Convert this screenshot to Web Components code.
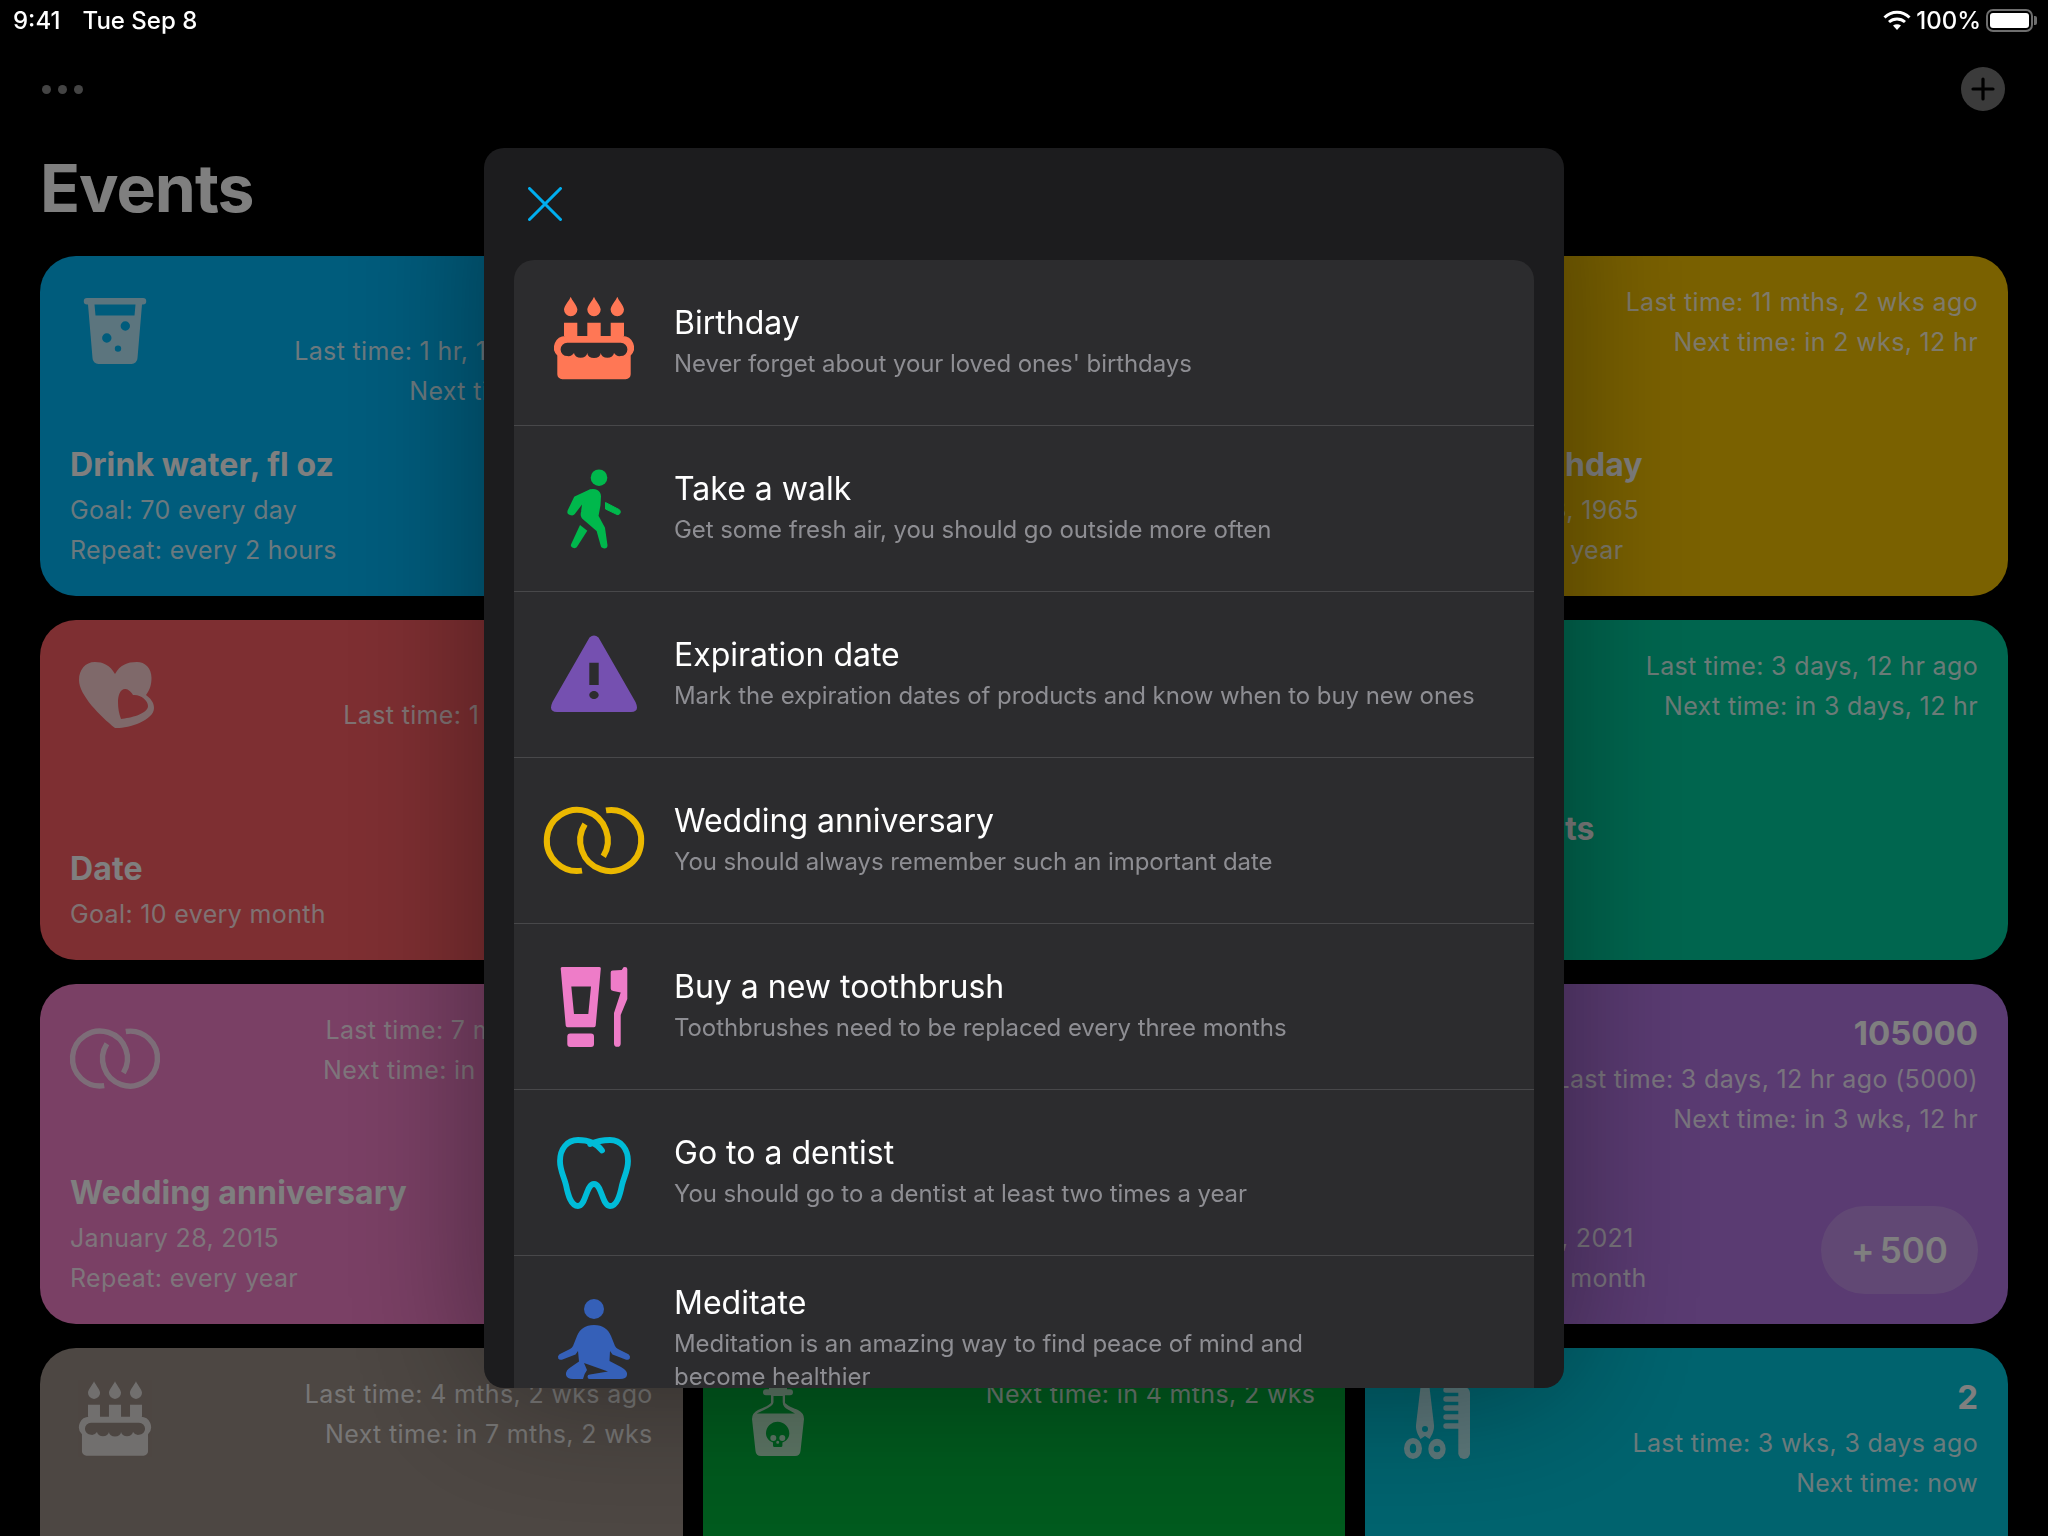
<!DOCTYPE html>
<html>
<head>
<meta charset="utf-8">
<title>Events</title>
<style>
	html, body { margin: 0; height: 1536px; overflow: hidden; background: #000; color: #fff; font-family: Inter, "Liberation Sans", sans-serif; }
</style>
</head>
<body>
<status-bar></status-bar>
<nav-bar></nav-bar>
<page-title>Events</page-title>
<event-grid>
	<event-card color="#00b8f8" icon="water">
		<span slot="value">10</span>
		<span slot="stats">Last time: 1 hr, 11 minutes ago</span>
		<span slot="stats">Next time: in 48 min</span>
		<span slot="title">Drink water, fl oz</span>
		<span slot="info">Goal: 70 every day</span>
		<span slot="info">Repeat: every 2 hours</span>
	</event-card>
	<event-card color="#e8e8ea"></event-card>
	<event-card color="#f4c200">
		<span slot="stats">Last time: 11 mths, 2 wks ago</span>
		<span slot="stats">Next time: in 2 wks, 12 hr</span>
		<span slot="title">Mom's birthday</span>
		<span slot="info">September 23, 1965</span>
		<span slot="info">Repeat: every year</span>
	</event-card>

	<event-card color="#fc5e64" icon="hearts">
		<span slot="value">1</span>
		<span slot="stats">Last time: 1 wk, 22 hr ago</span>
		<span slot="title">Date</span>
		<span slot="info">Goal: 10 every month</span>
	</event-card>
	<event-card color="#e8e8ea"></event-card>
	<event-card color="#00cc9e">
		<span slot="stats">Last time: 3 days, 12 hr ago</span>
		<span slot="stats">Next time: in 3 days, 12 hr</span>
		<span slot="title">Water plants</span>
		<span slot="info"></span>
		<span slot="info"></span>
	</event-card>

	<event-card color="#f480ca" icon="rings" icon-size="72">
		<span slot="stats">Last time: 7 mths, 1 wk ago</span>
		<span slot="stats">Next time: in 4 mths, 2 wks</span>
		<span slot="title">Wedding anniversary</span>
		<span slot="info">January 28, 2015</span>
		<span slot="info">Repeat: every year</span>
	</event-card>
	<event-card color="#e8e8ea"></event-card>
	<event-card color="#b476e4" action="500">
		<span slot="value">105000</span>
		<span slot="stats">Last time: 3 days, 12 hr ago (5000)</span>
		<span slot="stats">Next time: in 3 wks, 12 hr</span>
		<span slot="title">Steps</span>
		<span slot="info">September 15, 2021</span>
		<span slot="info">Repeat: every month</span>
	</event-card>

	<event-card color="#9a8e86" icon="cake" icon-size="72">
		<span slot="stats">Last time: 4 mths, 2 wks ago</span>
		<span slot="stats">Next time: in 7 mths, 2 wks</span>
	</event-card>
	<event-card color="#00b43c" icon="poison">
		<span slot="stats">Next time: in 4 mths, 2 wks</span>
	</event-card>
	<event-card color="#00c6dc" icon="barber">
		<span slot="value">2</span>
		<span slot="stats">Last time: 3 wks, 3 days ago</span>
		<span slot="stats">Next time: now</span>
	</event-card>
</event-grid>

<template-sheet>
	<template-row icon="cake" color="#ff7755" title="Birthday">Never forget about your loved ones' birthdays</template-row>
	<template-row icon="walk" color="#00b84c" title="Take a walk">Get some fresh air, you should go outside more often</template-row>
	<template-row icon="warning" color="#7550b0" title="Expiration date">Mark the expiration dates of products and know when to buy new ones</template-row>
	<template-row icon="rings" color="#ebb800" title="Wedding anniversary">You should always remember such an important date</template-row>
	<template-row icon="brush" color="#ee7cc8" title="Buy a new toothbrush">Toothbrushes need to be replaced every three months</template-row>
	<template-row icon="tooth" color="#00bcd8" title="Go to a dentist">You should go to a dentist at least two times a year</template-row>
	<template-row icon="meditate" color="#3560b8" title="Meditate" last>Meditation is an amazing way to find peace of mind and become healthier</template-row>
</template-sheet>

<script>
const ICONS = {
	water: { box: 90, svg: `<path fill-rule="evenodd" d="M17 12H73a2.8 2.8 0 0 1 0 6.5H72L67.5 72a6 6 0 0 1-6 6H28.5a6 6 0 0 1-6-6L18 18.500H17A2.800 2.800 0 0 1 17 12ZM24.500 18.500 25.500 29.500H64.500L65.500 18.500ZM60 40a4.700 4.700 0 1 0-9.400 0 4.700 4.700 0 0 0 9.400 0ZM41.500 52a4.700 4.700 0 1 0-9.400 0 4.700 4.700 0 0 0 9.400 0ZM51.200 62.600a3.200 3.200 0 1 0-6.400 0 3.200 3.200 0 0 0 6.400 0Z"/>` },
	hearts: { box: 90, svg: `<path fill-rule="evenodd" d="M45 24C40 15 33 12 25 12 15 12 9 20 9 30 9 45 30 66 45 78 56 79 84 71 84 58 84 52 80 48 76 45 80 40 81.500 34 81.500 28 81.500 18 75 12 67 12 57 12 50 15 45 24ZM63 45C60 40 57 39 55 39 50 39 48 46 48 52 48 58 49 64 51 69 60 68 78 64 78 56 78 50 70 44 63 45Z"/>` },
	rings: { box: 80, svg: `<g fill="none" stroke="currentColor" stroke-width="6"><path d="M28 69.600A30.500 30.500 0 1 1 49.300 55.400"/><path d="M52 9.400A30.500 30.500 0 1 1 31 23.100"/></g>` },
	cake: { box: 80, svg: `<path fill-rule="evenodd" d="M10 19.700H23.300V33H33.300V19.700H46.700V33H56.700V19.700H70V33H68.500A11.500 11.500 0 0 1 76.700 52.600V71.300A5 5 0 0 1 71.700 76.300H8.300A5 5 0 0 1 3.300 71.300V52.600A11.500 11.500 0 0 1 11.500 33H10ZM13.300 39.700H66.700A6.700 6.700 0 0 1 66.700 53.100 6.700 6.700 0 0 1 60 50.100 6.670 5 0 0 1 46.700 50.100 6.670 5 0 0 1 33.300 50.100 6.670 5 0 0 1 20 50.100 6.700 6.700 0 0 1 13.300 53.100 6.700 6.700 0 0 1 13.300 39.700Z"/><path d="M16.700-6.300C17.700-3 23.400 3 23.400 6.500A6.700 6.700 0 0 1 10 6.500C10 3 15.700-3 16.700-6.300Z"/><path d="M40-6.300C41-3 46.700 3 46.700 6.500A6.700 6.700 0 0 1 33.300 6.500C33.300 3 39-3 40-6.300Z"/><path d="M63.300-6.300C64.300-3 70 3 70 6.500A6.700 6.700 0 0 1 56.600 6.500C56.600 3 62.300-3 63.300-6.300Z"/>` },
	walk: { box: 80, svg: `<circle cx="45" cy="8.700" r="8.300"/><path stroke="currentColor" stroke-width="2" stroke-linejoin="round" d="M21 28.500 36 21.300C41 20 46 22 46 27.500L45.500 36 43.500 47 50 59 52.500 76.500C52.500 79 48 79 47.700 76.500L43.500 61.500 29 49C27.500 47.500 27.500 45 28 43L29.500 32 20 44.500C18.500 46.500 13.500 45 14.500 42Z"/><path d="M26 56 33.300 61.700 22.900 78C21 80.500 16 78.500 17 75.500Z"/><path stroke="currentColor" stroke-width="1" stroke-linejoin="round" d="M51.500 33.500 65 40.500C67.500 42 66 46.500 63 45.500L51.500 40Z"/>` },
	warning: { box: 80, svg: `<path fill-rule="evenodd" d="M35.500 2.500Q40-1.500 44.500 2.500L81.500 67Q86 77 77 77H3Q-6 77-1.500 67ZM35.300 27.700V50H44.700V27.700ZM40 56C37.500 56 35.300 57.800 35.300 60S37.500 64 40 64 44.700 62.200 44.700 60 42.500 56 40 56Z"/>` },
	brush: { box: 80, svg: `<path fill-rule="evenodd" d="M8 0H45.500Q47 0 46.800 1.500L41.700 58.500Q41.500 60.300 40 60.300H13.400Q12 60.300 11.700 58.500L6.700 1.500Q6.600 0 8 0ZM17.300 19.500 20 47H34.300L37 19.500Z"/><rect x="13.300" y="66.500" width="26.700" height="13.500" rx="3"/><path d="M58.500 3.500 67.700 3 69.500.2Q73.300-.5 73.300 2V32L66.700 48V76.500A3.300 3.300 0 0 1 60 76.500V46L66.700 25.600 59.300 24Q56.700 23.500 56.700 21.500V5.500Q56.700 3.500 58.500 3.500Z"/>` },
	tooth: { box: 80, svg: `<path fill="none" stroke="currentColor" stroke-width="5.800" stroke-linecap="round" stroke-linejoin="round" d="M48 17.500C44 12 36 7 24 7 13 7 6 16 6 28 6 38 10 43 12 52 14 62 17 73 24 73 32 73 32 51 40 51 48 51 48 73 56 73 63 73 66 62 68 52 70 43 74 38 74 28 74 16 67 7 56 7 48 7 42 8.500 36 11"/>` },
	meditate: { box: 80, svg: `<ellipse cx="40" cy="10" rx="10" ry="10"/><path d="M40 26C49 26 54 30 57 37L61 47Q62 49 64 50L74.500 55.300Q76.800 57 75.800 59.500 74.500 61.500 71.500 60.500L58.500 55.500 56 52 55.500 62 67 68Q74 72 73 76 72.500 80 66 80H35.500Q33.500 80 33.500 77.500 33.500 75.500 36 75.500L54 72.500 30 64 33 71Q30 75 29 80H19Q13 80 12 76 11.500 71 17 68L25 62.500 24 52 21.500 55.500 8.500 60.500Q5.500 61.500 4.200 59.500 3.200 57 5.500 55.300L16 50Q18 49 19 47L23 37C26 30 31 26 40 26Z"/>` },
	poison: { box: 90, svg: `<path fill-rule="evenodd" d="M36 3H54V11.300H57A3 3 0 0 1 57 17.300H52V25C56 29 61 30 65 32Q71 35 71 41L67.500 73Q67 78 62 78H28Q23 78 22.500 73L19 41Q19 35 25 32C29 30 34 29 38 25V17.300H33A3 3 0 0 1 33 11.300H36ZM40.500 18V24C40.500 27 36 29.500 32 31.500L23.700 35.500H62L54 31C52 30 49.700 27.500 49.700 24V18ZM44.700 43.700A11.700 11.700 0 0 0 33 55.300C33 59.500 35.500 63 40 64.500V67.500Q40 69 41.500 69H48Q49.400 69 49.400 67.500V64.500C54 63 56.300 59.500 56.300 55.300A11.700 11.700 0 0 0 44.700 43.700ZM40.300 57A3 3 0 1 1 40.300 63 3 3 0 1 1 40.300 57ZM49.300 57A3 3 0 1 1 49.300 63 3 3 0 1 1 49.300 57ZM44.700 62.800A1.500 1.500 0 1 1 44.700 65.800 1.500 1.500 0 1 1 44.700 62.800Z"/>` },
	barber: { box: 90, svg: `<path fill-rule="evenodd" d="M26 5H34L39 47C39.500 52 37 57 34.500 61L30 58 25.500 61C23 57 20.500 52 21 47ZM30 48A3 3 0 1 0 30 54 3 3 0 1 0 30 48Z"/><path fill-rule="evenodd" d="M18 60A9 10.500 0 1 0 18 81 9 10.500 0 1 0 18 60ZM18 65.700A3.200 4.800 0 1 1 18 75.300 3.200 4.800 0 1 1 18 65.700Z"/><path fill-rule="evenodd" d="M42 60.700A8.700 10.300 0 1 0 42 81.300 8.700 10.300 0 1 0 42 60.700ZM42 67.700A3.300 3.300 0 1 1 42 74.300 3.300 3.300 0 1 1 42 67.700Z"/><rect x="63.300" y="9" width="11.700" height="72" rx="5.800"/><rect x="48.300" y="9.300" width="22" height="5.500" rx="2.700"/><rect x="48.300" y="18.300" width="22" height="5.500" rx="2.700"/><rect x="48.300" y="27.300" width="22" height="5.500" rx="2.700"/><rect x="48.300" y="36.300" width="22" height="5.500" rx="2.700"/><rect x="48.300" y="45.300" width="22" height="5.500" rx="2.700"/>` },
};

class AppIcon extends HTMLElement {
	connectedCallback() {
		const icon = ICONS[this.getAttribute("name")];
		const size = this.getAttribute("size") || icon.box;
		const shadow = this.attachShadow({ mode: "open" });
		shadow.innerHTML = `
			<style>
				:host { display: block; line-height: 0; }
				svg { overflow: visible; fill: currentColor; display: block; }
			</style>
			<svg width="${size}" height="${size}" viewBox="0 0 ${icon.box} ${icon.box}">${icon.svg}</svg>
		`;
	}
}

class StatusBar extends HTMLElement {
	connectedCallback() {
		const shadow = this.attachShadow({ mode: "open" });
		shadow.innerHTML = `
			<style>
				:host { display: flex; position: relative; z-index: 20; height: 40px; align-items: center; justify-content: space-between; padding: 0 15px 0 13px; font-size: 24px; font-weight: 500; color: #fff; }
				.left, .right { display: flex; align-items: center; }
				.date { margin-left: 22px; }
				.right { gap: 5px; }
				.battery { width: 47px; height: 23px; box-sizing: border-box; border: 2px solid #6e6e6e; border-radius: 7px; padding: 2px; position: relative; }
				.battery i { display: block; height: 100%; background: #fff; border-radius: 3px; }
				.battery::after { content: ""; position: absolute; right: -6px; top: 5px; width: 3px; height: 9px; background: #6e6e6e; border-radius: 0 2px 2px 0; }
			</style>
			<div class="left"><span>9:41</span><span class="date">Tue Sep 8</span></div>
			<div class="right">
				<svg width="28" height="20" viewBox="0 0 28 20"><g fill="none" stroke="#fff" stroke-width="3"><path d="M1.500 7.500C8.500 .5 19.500 .5 26.500 7.500"/><path d="M6 12C10.500 8 17.500 8 22 12"/></g><path fill="#fff" d="M10 15.500C12.500 13.700 15.500 13.700 18 15.500L14 20Z"/></svg>
				<span>100%</span>
				<div class="battery"><i></i></div>
			</div>
		`;
	}
}

class NavBar extends HTMLElement {
	connectedCallback() {
		const shadow = this.attachShadow({ mode: "open" });
		shadow.innerHTML = `
			<style>
				:host { display: flex; height: 98px; align-items: center; justify-content: space-between; padding: 0 43px 0 42px; }
				.dots { display: flex; gap: 7px; }
				.dots i { width: 9px; height: 9px; border-radius: 50%; background: #888; }
				.plus { width: 44px; height: 44px; border-radius: 50%; background: #777; display: flex; align-items: center; justify-content: center; }
			</style>
			<div class="dots"><i></i><i></i><i></i></div>
			<div class="plus"><svg width="24" height="24" viewBox="0 0 24 24"><path stroke="#000" stroke-width="3.200" stroke-linecap="round" d="M12 2V22M2 12H22"/></svg></div>
		`;
	}
}

class PageTitle extends HTMLElement {
	connectedCallback() {
		const shadow = this.attachShadow({ mode: "open" });
		shadow.innerHTML = `
			<style>
				:host { display: block; padding: 10px 40px 28px; font-size: 66px; line-height: 80px; font-weight: 700; letter-spacing: -1px; }
			</style>
			<slot></slot>
		`;
	}
}

class EventGrid extends HTMLElement {
	connectedCallback() {
		const shadow = this.attachShadow({ mode: "open" });
		shadow.innerHTML = `
			<style>
				:host { display: grid; grid-template-columns: repeat(3, 1fr); grid-auto-rows: 340px; column-gap: 20px; row-gap: 24px; padding: 0 40px; }
			</style>
			<slot></slot>
		`;
	}
}

class EventCard extends HTMLElement {
	connectedCallback() {
		const icon = this.getAttribute("icon");
		const action = this.getAttribute("action");
		const size = this.getAttribute("icon-size") || "";
		const shadow = this.attachShadow({ mode: "open" });
		shadow.innerHTML = `
			<style>
				:host { display: grid; grid-template-columns: auto 1fr; grid-template-rows: 1fr auto; box-sizing: border-box; padding: 26px 30px; border-radius: 36px; min-width: 0; overflow: hidden; font-size: 25px; line-height: 40px; letter-spacing: .35px; color: #fff; }
				.icon { width: 90px; height: 90px; margin-top: 4px; display: flex; align-items: center; justify-content: center; opacity: .72; }
				.top { display: flex; flex-direction: column; align-items: flex-end; white-space: nowrap; color: rgba(255,255,255,.85); }
				.bottom { display: flex; flex-direction: column; white-space: nowrap; color: rgba(255,255,255,.85); }
				.foot { grid-column: 1 / 3; display: flex; justify-content: space-between; align-items: flex-end; }
				::slotted([slot=value]) { font-size: 33px; font-weight: 700; line-height: 46px; letter-spacing: 0; color: #fff; margin-bottom: 3px; }
				::slotted([slot=title]) { font-size: 32px; font-weight: 700; line-height: 46px; letter-spacing: .12px; color: #fff; margin-bottom: 2px; }
				::slotted([slot=stats]), ::slotted([slot=info]) { display: block; min-height: 40px; }
				.action { display: flex; align-items: center; justify-content: center; gap: 5px; width: 157px; height: 88px; margin-bottom: 4px; border-radius: 44px; background: rgba(255,255,255,.2); font-size: 35px; font-weight: 600; letter-spacing: 0; }
			</style>
			<div class="icon">${icon ? `<app-icon name="${icon}" size="${size}"></app-icon>` : ""}</div>
			<div class="top"><slot name="value"></slot><slot name="stats"></slot></div>
			<div class="foot">
				<div class="bottom"><slot name="title"></slot><slot name="info"></slot></div>
				${action ? `<div class="action"><span>+</span><span>${action}</span></div>` : ""}
			</div>
		`;
		this.style.background = this.getAttribute("color");
	}
}

class TemplateSheet extends HTMLElement {
	connectedCallback() {
		const shadow = this.attachShadow({ mode: "open" });
		shadow.innerHTML = `
			<style>
				:host { position: fixed; inset: 0; z-index: 10; display: flex; align-items: center; justify-content: center; background: rgba(0,0,0,.5); }
				.sheet { width: 1080px; height: 1240px; box-sizing: border-box; padding: 0 30px; border-radius: 20px; overflow: hidden; background: #1c1c1e; box-shadow: 0 0 140px rgba(0,0,0,.4); }
				header { height: 112px; display: flex; align-items: center; padding-left: 14px; }
				.list { background: #2c2c2e; border-radius: 20px 20px 0 0; overflow: hidden; }
			</style>
			<div class="sheet">
				<header><svg width="34" height="34" viewBox="0 0 34 34"><path stroke="#00aeef" stroke-width="3" stroke-linecap="round" d="M1.500 1.500 32.500 32.500M32.500 1.500 1.500 32.500"/></svg></header>
				<div class="list"><slot></slot></div>
			</div>
		`;
	}
}

class TemplateRow extends HTMLElement {
	connectedCallback() {
		const shadow = this.attachShadow({ mode: "open" });
		shadow.innerHTML = `
			<style>
				:host { display: flex; height: 165px; align-items: center; border-bottom: 1px solid #48484a; color: #8e8e93; font-size: 24px; line-height: 33px; letter-spacing: -.07px; }
				:host([last]) { border-bottom: 0; }
				.icon { flex: 0 0 160px; display: flex; justify-content: center; }
				.text { width: 700px; padding-bottom: 2px; }
				h3 { margin: 0 0 4px; font-size: 32px; font-weight: 400; line-height: 40px; letter-spacing: 0; color: #fff; }
				:host(:not([last])) .text { width: 830px; }
			</style>
			<div class="icon" style="color:${this.getAttribute("color")}"><app-icon name="${this.getAttribute("icon")}"></app-icon></div>
			<div class="text"><h3>${this.getAttribute("title")}</h3><slot></slot></div>
		`;
	}
}

customElements.define("app-icon", AppIcon);
customElements.define("status-bar", StatusBar);
customElements.define("nav-bar", NavBar);
customElements.define("page-title", PageTitle);
customElements.define("event-grid", EventGrid);
customElements.define("event-card", EventCard);
customElements.define("template-sheet", TemplateSheet);
customElements.define("template-row", TemplateRow);
</script>
</body>
</html>
